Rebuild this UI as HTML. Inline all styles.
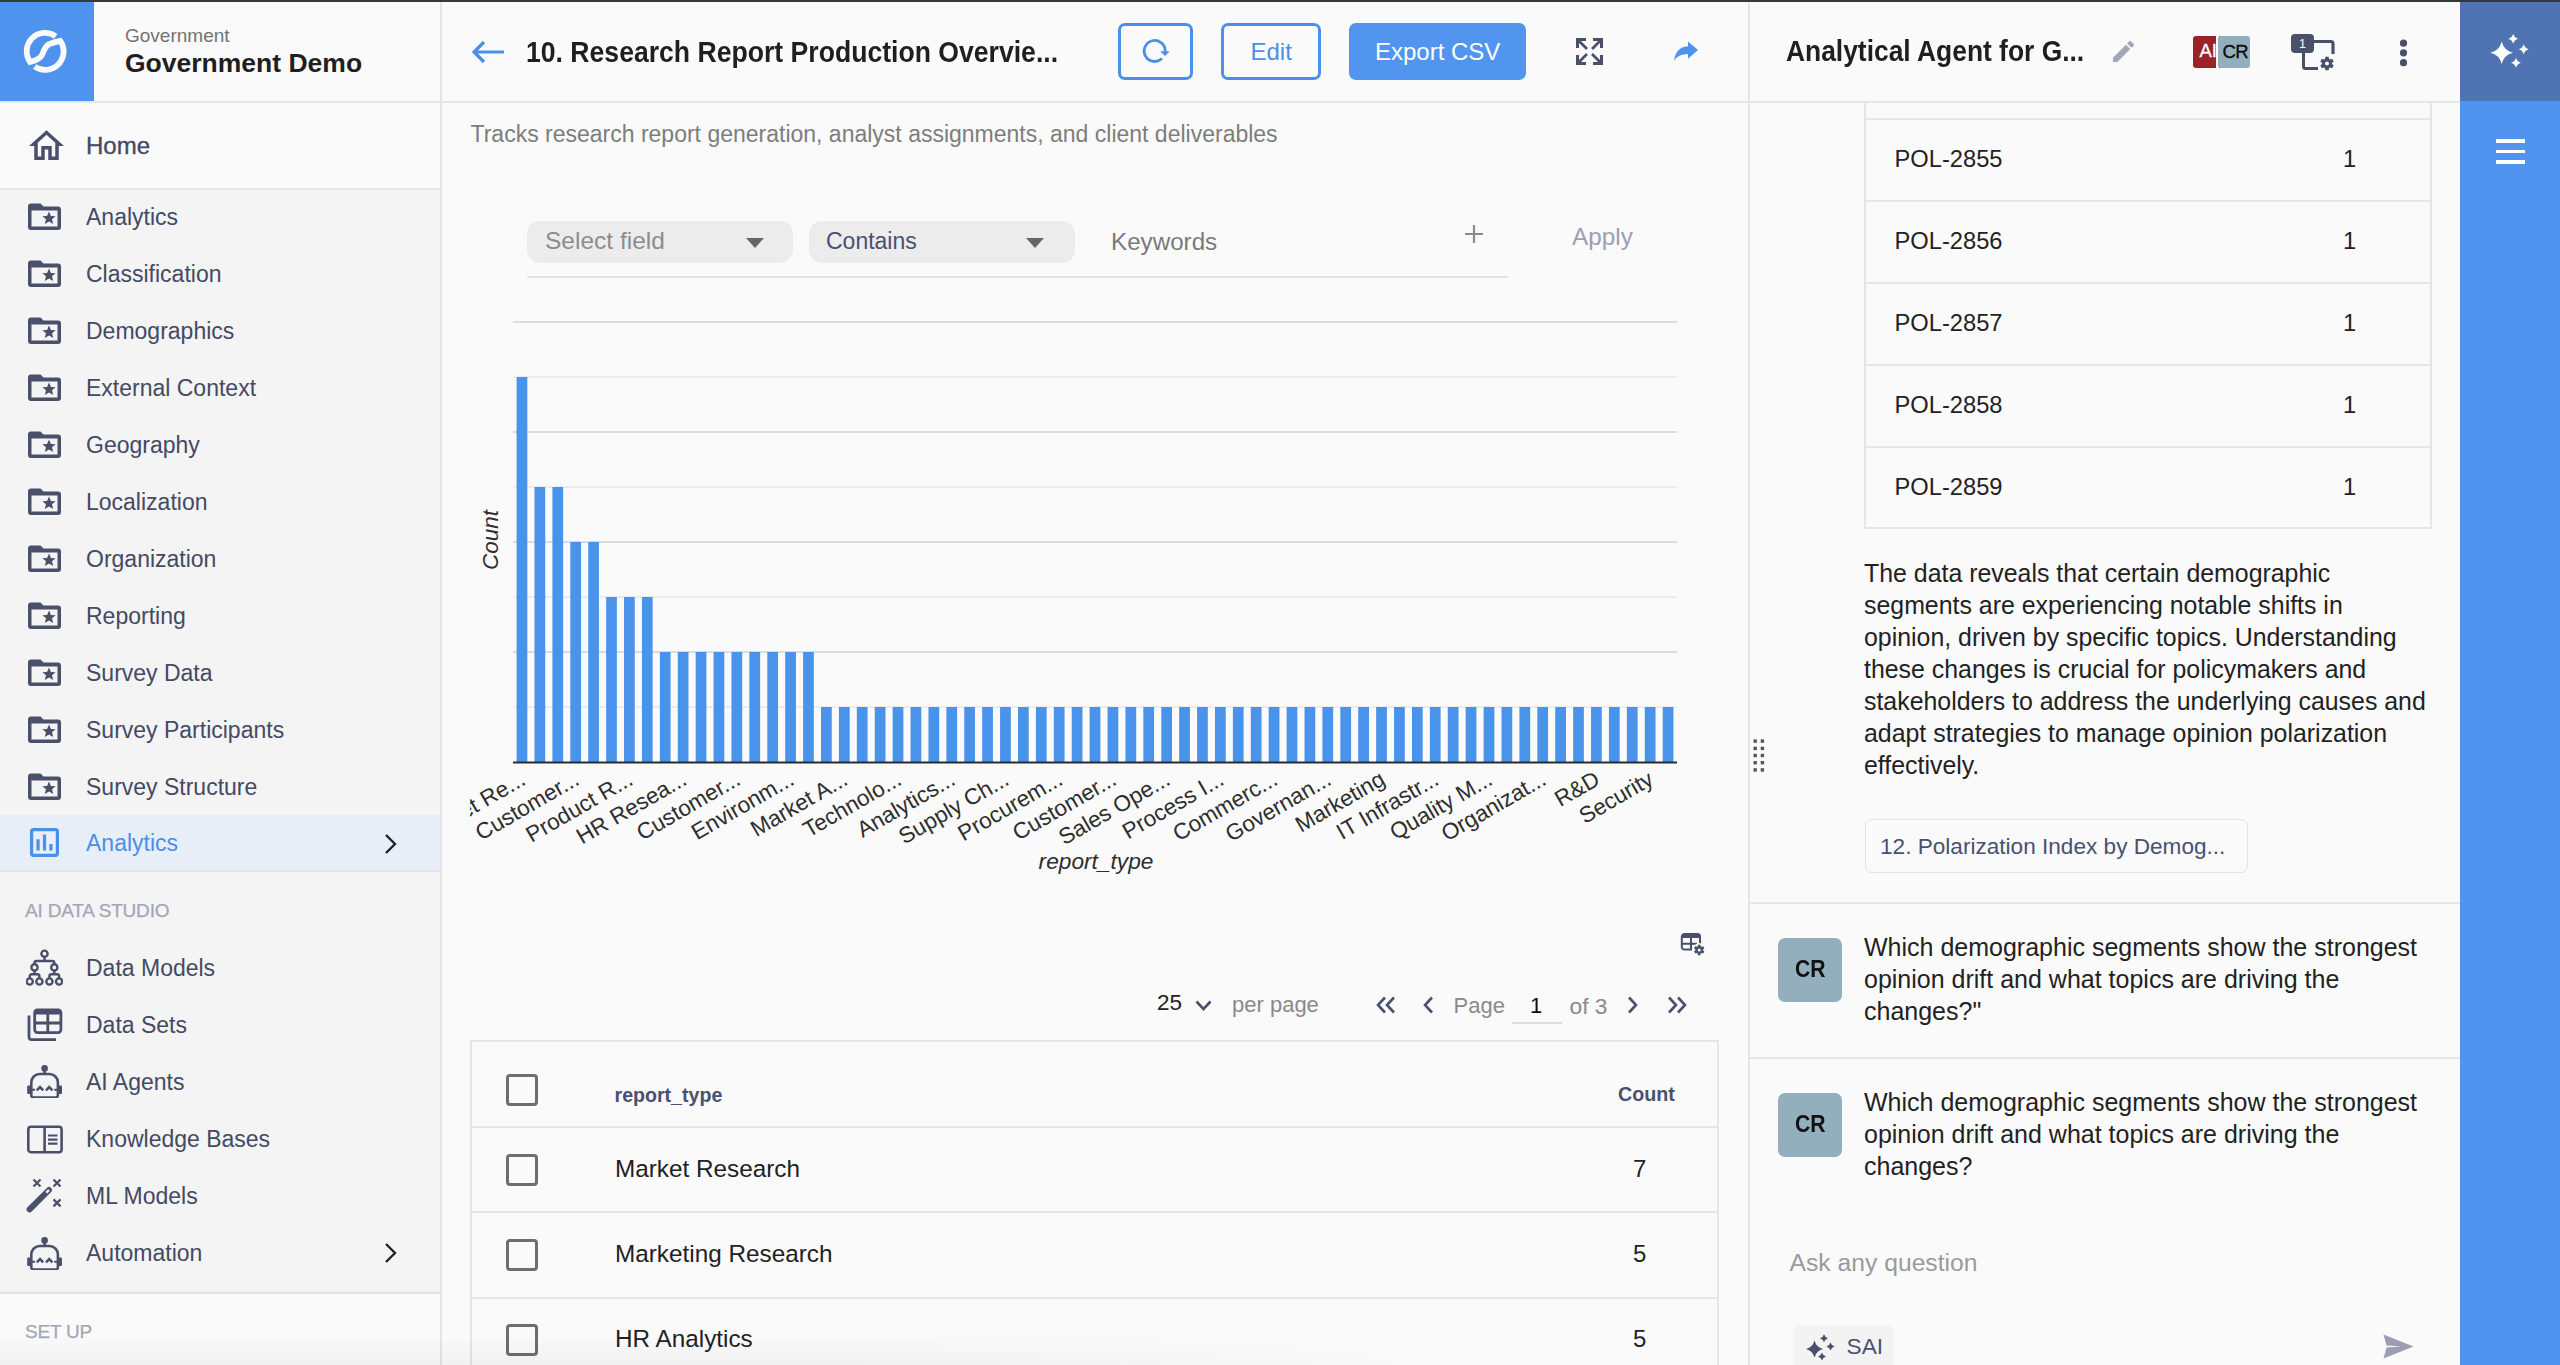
<!DOCTYPE html>
<html><head><meta charset="utf-8">
<style>
*{box-sizing:border-box;margin:0;padding:0}
html,body{width:2560px;height:1365px;overflow:hidden}
body{position:relative;background:#fafafa;font-family:"Liberation Sans",sans-serif;color:#222}
.a{position:absolute}
.t{position:absolute;white-space:nowrap;line-height:1}
.hl{position:absolute;height:2px;background:#e6e6e6}
.vl{position:absolute;width:2px;background:#e6e6e6}
/* sidebar */
#side{left:0;top:0;width:440px;height:1365px;background:#f4f4f4}
.nav{position:absolute;left:86px;font-size:23px;color:#434a63;white-space:nowrap;line-height:1}
.ico{position:absolute;left:26px}
</style></head>
<body>
<!-- top dark line -->
<div class="a" style="left:0;top:0;width:2560px;height:2px;background:#3a3836;z-index:10"></div>

<!-- SIDEBAR -->
<div class="a" id="side"></div>
<div class="a" style="left:0;top:0;width:440px;height:189px;background:#fafafa"></div>
<div class="a" style="left:0;top:2px;width:94px;height:99px;background:#4f93ef"></div>
<svg class="a" style="left:0;top:0" width="94" height="101" viewBox="0 0 94 101">
  <path d="M55.75 36.3A18.4 18.4 0 0 0 30.1 61.95C36 60.5 40 59 42 55C44 50 45.5 46 49 44.2C53 42.5 57 41.5 60.27 40.85A18.4 18.4 0 0 1 34.65 66.5" fill="none" stroke="#fafafa" stroke-width="5.8"/>
</svg>
<div class="t" style="left:125px;top:25.5px;font-size:19px;color:#727272">Government</div>
<div class="t" style="left:125px;top:50px;font-size:26.5px;font-weight:bold;color:#1f1f1f">Government Demo</div>
<div class="hl" style="left:0;top:101px;width:440px"></div>
<div class="hl" style="left:0;top:188px;width:440px"></div>
<div class="vl" style="left:440px;top:0;height:1365px"></div>


<svg width="0" height="0" style="position:absolute">
 <defs>
  <symbol id="fold" viewBox="0 0 33 27">
   <path fill-rule="evenodd" fill="#4a4f6a" d="M3 0.5H12.5L15.5 3.5H30A3 3 0 0 1 33 6.5V24A3 3 0 0 1 30 27H3A3 3 0 0 1 0 24V3.5A3 3 0 0 1 3 0.5ZM3.5 7.5V23.5H29.5V7.5Z"/>
   <path fill="#4a4f6a" d="M21 8.6L22.9 12.9L27.6 13.2L24 16.3L25.2 21L21 18.5L16.8 21L18 16.3L14.4 13.2L19.1 12.9Z"/>
  </symbol>
  <symbol id="robot" viewBox="0 0 37 33">
   <circle cx="18.6" cy="3.4" r="3.3" fill="#4a4f6a"/>
   <rect x="17.3" y="5" width="2.6" height="4" fill="#4a4f6a"/>
   <path d="M5.3 30.2V17.5A8.5 8.5 0 0 1 13.8 9H23.4A8.5 8.5 0 0 1 31.9 17.5V30.2A2.3 2.3 0 0 1 29.6 32.5H7.6A2.3 2.3 0 0 1 5.3 30.2Z" fill="none" stroke="#4a4f6a" stroke-width="2.6"/>
   <rect x="1.2" y="20.6" width="3.6" height="8.4" rx="1" fill="#4a4f6a"/>
   <rect x="32.4" y="20.6" width="3.6" height="8.4" rx="1" fill="#4a4f6a"/>
   <path d="M5 24.8H9M28.2 24.8H32" stroke="#4a4f6a" stroke-width="2"/>
   <path d="M10.8 25.4L14 22.2L17.2 25.4M20 25.4L23.2 22.2L26.4 25.4" fill="none" stroke="#4a4f6a" stroke-width="2.6"/>
  </symbol>
 </defs>
</svg>
<!-- Home -->
<svg class="a" style="left:29px;top:130px" width="35" height="30" viewBox="2 3 20 17"><path fill="#4a4f6a" d="M12 5.69l5 4.5V18h-2v-6H9v6H7v-7.81l5-4.5M12 3L2 12h3v8h6v-6h2v6h6v-8h3L12 3z"/></svg>
<div class="t" style="left:86px;top:133.5px;font-size:24px;color:#434a63;-webkit-text-stroke:0.35px #434a63">Home</div>

<!-- folder nav items -->
<svg class="a" style="left:28px;top:203px" width="33" height="27"><use href="#fold"/></svg>
<div class="nav" style="top:205.5px">Analytics</div>
<svg class="a" style="left:28px;top:260px" width="33" height="27"><use href="#fold"/></svg>
<div class="nav" style="top:262.5px">Classification</div>
<svg class="a" style="left:28px;top:317px" width="33" height="27"><use href="#fold"/></svg>
<div class="nav" style="top:319.5px">Demographics</div>
<svg class="a" style="left:28px;top:374px" width="33" height="27"><use href="#fold"/></svg>
<div class="nav" style="top:376.5px">External Context</div>
<svg class="a" style="left:28px;top:431px" width="33" height="27"><use href="#fold"/></svg>
<div class="nav" style="top:433.5px">Geography</div>
<svg class="a" style="left:28px;top:488px" width="33" height="27"><use href="#fold"/></svg>
<div class="nav" style="top:490.5px">Localization</div>
<svg class="a" style="left:28px;top:545px" width="33" height="27"><use href="#fold"/></svg>
<div class="nav" style="top:547.5px">Organization</div>
<svg class="a" style="left:28px;top:602px" width="33" height="27"><use href="#fold"/></svg>
<div class="nav" style="top:604.5px">Reporting</div>
<svg class="a" style="left:28px;top:659px" width="33" height="27"><use href="#fold"/></svg>
<div class="nav" style="top:661.5px">Survey Data</div>
<svg class="a" style="left:28px;top:716px" width="33" height="27"><use href="#fold"/></svg>
<div class="nav" style="top:718.5px">Survey Participants</div>
<svg class="a" style="left:28px;top:773px" width="33" height="27"><use href="#fold"/></svg>
<div class="nav" style="top:775.5px">Survey Structure</div>

<!-- selected analytics -->
<div class="a" style="left:0;top:815px;width:440px;height:56px;background:#e8eef8"></div>
<div class="hl" style="left:0;top:870px;width:440px;background:#e3e3e3"></div>
<svg class="a" style="left:30px;top:828px" width="29" height="29" viewBox="3 3 18 18"><path fill="#4a90e8" d="M9 17H7v-7h2v7zm4 0h-2V7h2v10zm4 0h-2v-4h2v4zm2 2H5V5h14v14zm0-16H5c-1.1 0-2 .9-2 2v14c0 1.1.9 2 2 2h14c1.1 0 2-.9 2-2V5c0-1.1-.9-2-2-2z"/></svg>
<div class="nav" style="top:832px;color:#4a90e8">Analytics</div>
<svg class="a" style="left:383px;top:833px" width="16" height="22" viewBox="0 0 16 22"><path d="M3 2L12 11L3 20" fill="none" stroke="#222" stroke-width="2.4"/></svg>

<div class="t" style="left:25px;top:901px;font-size:19px;color:#a3a6b6;letter-spacing:-0.2px;-webkit-text-stroke:0.25px #a3a6b6">AI DATA STUDIO</div>

<!-- Data models -->
<svg class="a" style="left:26px;top:949px" width="37" height="37" viewBox="0 0 37 37" fill="none" stroke="#4a4f6a" stroke-width="2.4">
 <circle cx="18.5" cy="4.7" r="3.1"/>
 <path d="M18.5 7.8V12M8.5 15.3V14A2 2 0 0 1 10.5 12H26.3A2 2 0 0 1 28.3 14V15.3"/>
 <circle cx="8.5" cy="18.4" r="3.1"/><circle cx="28.3" cy="18.4" r="3.1"/>
 <path d="M8.5 21.5V25.3M28.3 21.5V25.3M3.7 29.4V27.3A2 2 0 0 1 5.7 25.3H11.4A2 2 0 0 1 13.4 27.3V29.4M23.4 29.4V27.3A2 2 0 0 1 25.4 25.3H31.1A2 2 0 0 1 33.1 27.3V29.4"/>
 <circle cx="3.7" cy="32.5" r="3.1"/><circle cx="13.4" cy="32.5" r="3.1"/><circle cx="23.4" cy="32.5" r="3.1"/><circle cx="33.1" cy="32.5" r="3.1"/>
</svg>
<div class="nav" style="top:956.5px">Data Models</div>
<!-- Data sets -->
<svg class="a" style="left:26px;top:1008px" width="38" height="34" viewBox="0 0 38 34" fill="none" stroke="#4a4f6a" stroke-width="2.8">
 <rect x="8.7" y="1.9" width="26.2" height="22.7" rx="2.8"/>
 <rect x="8.5" y="1.5" width="26.5" height="5" fill="#4a4f6a" stroke="none" rx="1"/>
 <path d="M8.7 15H34.9M21.8 5V24.6"/>
 <path d="M3 7.5V29.2A2.4 2.4 0 0 0 5.4 31.6H30"/>
</svg>
<div class="nav" style="top:1013.5px">Data Sets</div>
<!-- AI agents -->
<svg class="a" style="left:26px;top:1065px" width="37" height="33"><use href="#robot"/></svg>
<div class="nav" style="top:1070.5px">AI Agents</div>
<!-- Knowledge -->
<svg class="a" style="left:26px;top:1125px" width="37" height="29" viewBox="0 0 37 29" fill="none" stroke="#4a4f6a" stroke-width="2.6">
 <rect x="2.3" y="1.8" width="33.3" height="25.4" rx="2.6"/>
 <path d="M18.6 1.8V27.2"/>
 <path d="M22 10.5H31.5M22 14.6H31.5M22 18.7H31.5" stroke-width="2.2"/>
</svg>
<div class="nav" style="top:1127.5px">Knowledge Bases</div>
<!-- ML models -->
<svg class="a" style="left:26px;top:1178px" width="37" height="37" viewBox="0 0 37 37">
 <path d="M3.6 31.4L23 12" stroke="#4a4f6a" stroke-width="6" stroke-linecap="round"/>
 <path d="M20.3 14.7L23 12" stroke="#f4f4f4" stroke-width="2.4"/>
 <path d="M7.5 1.5L14.5 8.5M14.5 1.5L7.5 8.5M27.5 1.5L34.5 8.5M34.5 1.5L27.5 8.5M27.5 21.4L34.5 28.4M34.5 21.4L27.5 28.4" stroke="#4a4f6a" stroke-width="2.2"/>
</svg>
<div class="nav" style="top:1184.5px">ML Models</div>
<!-- Automation -->
<svg class="a" style="left:26px;top:1237px" width="37" height="33"><use href="#robot"/></svg>
<div class="nav" style="top:1241.5px">Automation</div>
<svg class="a" style="left:383px;top:1242px" width="16" height="22" viewBox="0 0 16 22"><path d="M3 2L12 11L3 20" fill="none" stroke="#222" stroke-width="2.4"/></svg>

<div class="hl" style="left:0;top:1292px;width:440px;background:#e3e3e3"></div>
<div class="a" style="left:0;top:1294px;width:440px;height:71px;background:#fafafa"></div>
<div class="t" style="left:25px;top:1322px;font-size:19px;color:#a3a6b6;letter-spacing:-0.2px;-webkit-text-stroke:0.25px #a3a6b6">SET UP</div>

<!-- MAIN HEADER -->
<div class="hl" style="left:441px;top:101px;width:1308px"></div>
<div class="vl" style="left:1748px;top:0;height:1365px"></div>
<svg class="a" style="left:471px;top:40px" width="34" height="24" viewBox="0 0 34 24"><path d="M33 12H3M13 2L3 12L13 22" fill="none" stroke="#4a90e8" stroke-width="3.2"/></svg>
<div class="t" style="left:526px;top:37.5px;font-size:29px;font-weight:bold;color:#1f1f1f;transform:scaleX(0.917);transform-origin:0 0">10. Research Report Production Overvie...</div>

<div class="a" style="left:1118px;top:23px;width:75px;height:57px;border:3px solid #4a90e8;border-radius:7px"></div>
<svg class="a" style="left:1140px;top:36px" width="32" height="28" viewBox="0 0 32 28"><path d="M21.2 23.2A10.5 10.5 0 1 1 25.2 14.7" fill="none" stroke="#4a90e8" stroke-width="2.8" stroke-linecap="round"/><path d="M20.2 15.2H29.8L25 19.9Z" fill="#4a90e8"/></svg>
<div class="a" style="left:1221px;top:23px;width:100px;height:57px;border:3px solid #4a90e8;border-radius:7px"></div>
<div class="t" style="left:1250.5px;top:39.5px;font-size:24px;color:#4a90e8">Edit</div>
<div class="a" style="left:1349px;top:23px;width:177px;height:57px;background:#5195ee;border-radius:7px"></div>
<div class="t" style="left:1375px;top:39.5px;font-size:24px;color:#fff">Export CSV</div>
<svg class="a" style="left:1576px;top:38px" width="27" height="27" viewBox="0 0 27 27" fill="none" stroke="#4a4f6a" stroke-width="3">
 <path d="M1.5 10V1.5H10M17 1.5H25.5V10M25.5 17V25.5H17M10 25.5H1.5V17"/>
 <path d="M2.5 2.5L11 11M24.5 2.5L16 11M24.5 24.5L16 16M2.5 24.5L11 16" stroke-width="2.8"/>
</svg>
<svg class="a" style="left:1673px;top:41px" width="26" height="22" viewBox="0 0 26 22"><path fill="#4d94ef" d="M25 9L15 0.5V5.2C6 5.8 2 11.5 1 20C4 15 8 13.2 15 13V17.8Z"/></svg>

<div class="t" style="left:470.5px;top:122.5px;font-size:23px;color:#7d7d7d">Tracks research report generation, analyst assignments, and client deliverables</div>

<!-- filter -->
<div class="a" style="left:527px;top:221px;width:266px;height:42px;background:#ececec;border-radius:13px"></div>
<div class="t" style="left:545px;top:229px;font-size:24.5px;color:#8c8c8c">Select field</div>
<svg class="a" style="left:746px;top:238px" width="18" height="10"><path d="M0 0H18L9 10Z" fill="#666"/></svg>
<div class="a" style="left:809px;top:221px;width:266px;height:42px;background:#ececec;border-radius:13px"></div>
<div class="t" style="left:826px;top:230px;font-size:23px;color:#4a5070">Contains</div>
<svg class="a" style="left:1026px;top:238px" width="18" height="10"><path d="M0 0H18L9 10Z" fill="#666"/></svg>
<div class="t" style="left:1111px;top:229.5px;font-size:24.2px;color:#7a7a7a">Keywords</div>
<svg class="a" style="left:1464px;top:224px" width="20" height="20"><path d="M10 1V19M1 10H19" stroke="#8a8a8a" stroke-width="2.2"/></svg>
<div class="t" style="left:1572px;top:224.5px;font-size:24.3px;color:#9c9fb2">Apply</div>
<div class="hl" style="left:527px;top:276px;width:981px;background:#e3e3e3"></div>

<svg class="a" style="left:470px;top:290px" width="1278" height="610" viewBox="470 290 1278 610">
<rect x="513" y="321.25" width="1164" height="1.5" fill="#d2d2d2"/>
<rect x="513" y="376.25" width="1164" height="1.5" fill="#e8e8e8"/>
<rect x="513" y="431.25" width="1164" height="1.5" fill="#d2d2d2"/>
<rect x="513" y="486.25" width="1164" height="1.5" fill="#e8e8e8"/>
<rect x="513" y="541.25" width="1164" height="1.5" fill="#d2d2d2"/>
<rect x="513" y="596.25" width="1164" height="1.5" fill="#e8e8e8"/>
<rect x="513" y="651.25" width="1164" height="1.5" fill="#d2d2d2"/>
<rect x="513" y="706.25" width="1164" height="1.5" fill="#e8e8e8"/>
<rect x="516.58" y="377" width="10.74" height="385" fill="#4a93ea"/>
<rect x="534.49" y="487" width="10.74" height="275" fill="#4a93ea"/>
<rect x="552.40" y="487" width="10.74" height="275" fill="#4a93ea"/>
<rect x="570.30" y="542" width="10.74" height="220" fill="#4a93ea"/>
<rect x="588.21" y="542" width="10.74" height="220" fill="#4a93ea"/>
<rect x="606.12" y="597" width="10.74" height="165" fill="#4a93ea"/>
<rect x="624.03" y="597" width="10.74" height="165" fill="#4a93ea"/>
<rect x="641.94" y="597" width="10.74" height="165" fill="#4a93ea"/>
<rect x="659.84" y="652" width="10.74" height="110" fill="#4a93ea"/>
<rect x="677.75" y="652" width="10.74" height="110" fill="#4a93ea"/>
<rect x="695.66" y="652" width="10.74" height="110" fill="#4a93ea"/>
<rect x="713.57" y="652" width="10.74" height="110" fill="#4a93ea"/>
<rect x="731.47" y="652" width="10.74" height="110" fill="#4a93ea"/>
<rect x="749.38" y="652" width="10.74" height="110" fill="#4a93ea"/>
<rect x="767.29" y="652" width="10.74" height="110" fill="#4a93ea"/>
<rect x="785.20" y="652" width="10.74" height="110" fill="#4a93ea"/>
<rect x="803.10" y="652" width="10.74" height="110" fill="#4a93ea"/>
<rect x="821.01" y="707" width="10.74" height="55" fill="#4a93ea"/>
<rect x="838.92" y="707" width="10.74" height="55" fill="#4a93ea"/>
<rect x="856.83" y="707" width="10.74" height="55" fill="#4a93ea"/>
<rect x="874.74" y="707" width="10.74" height="55" fill="#4a93ea"/>
<rect x="892.64" y="707" width="10.74" height="55" fill="#4a93ea"/>
<rect x="910.55" y="707" width="10.74" height="55" fill="#4a93ea"/>
<rect x="928.46" y="707" width="10.74" height="55" fill="#4a93ea"/>
<rect x="946.37" y="707" width="10.74" height="55" fill="#4a93ea"/>
<rect x="964.27" y="707" width="10.74" height="55" fill="#4a93ea"/>
<rect x="982.18" y="707" width="10.74" height="55" fill="#4a93ea"/>
<rect x="1000.09" y="707" width="10.74" height="55" fill="#4a93ea"/>
<rect x="1018.00" y="707" width="10.74" height="55" fill="#4a93ea"/>
<rect x="1035.90" y="707" width="10.74" height="55" fill="#4a93ea"/>
<rect x="1053.81" y="707" width="10.74" height="55" fill="#4a93ea"/>
<rect x="1071.72" y="707" width="10.74" height="55" fill="#4a93ea"/>
<rect x="1089.63" y="707" width="10.74" height="55" fill="#4a93ea"/>
<rect x="1107.54" y="707" width="10.74" height="55" fill="#4a93ea"/>
<rect x="1125.44" y="707" width="10.74" height="55" fill="#4a93ea"/>
<rect x="1143.35" y="707" width="10.74" height="55" fill="#4a93ea"/>
<rect x="1161.26" y="707" width="10.74" height="55" fill="#4a93ea"/>
<rect x="1179.17" y="707" width="10.74" height="55" fill="#4a93ea"/>
<rect x="1197.07" y="707" width="10.74" height="55" fill="#4a93ea"/>
<rect x="1214.98" y="707" width="10.74" height="55" fill="#4a93ea"/>
<rect x="1232.89" y="707" width="10.74" height="55" fill="#4a93ea"/>
<rect x="1250.80" y="707" width="10.74" height="55" fill="#4a93ea"/>
<rect x="1268.70" y="707" width="10.74" height="55" fill="#4a93ea"/>
<rect x="1286.61" y="707" width="10.74" height="55" fill="#4a93ea"/>
<rect x="1304.52" y="707" width="10.74" height="55" fill="#4a93ea"/>
<rect x="1322.43" y="707" width="10.74" height="55" fill="#4a93ea"/>
<rect x="1340.34" y="707" width="10.74" height="55" fill="#4a93ea"/>
<rect x="1358.24" y="707" width="10.74" height="55" fill="#4a93ea"/>
<rect x="1376.15" y="707" width="10.74" height="55" fill="#4a93ea"/>
<rect x="1394.06" y="707" width="10.74" height="55" fill="#4a93ea"/>
<rect x="1411.97" y="707" width="10.74" height="55" fill="#4a93ea"/>
<rect x="1429.87" y="707" width="10.74" height="55" fill="#4a93ea"/>
<rect x="1447.78" y="707" width="10.74" height="55" fill="#4a93ea"/>
<rect x="1465.69" y="707" width="10.74" height="55" fill="#4a93ea"/>
<rect x="1483.60" y="707" width="10.74" height="55" fill="#4a93ea"/>
<rect x="1501.50" y="707" width="10.74" height="55" fill="#4a93ea"/>
<rect x="1519.41" y="707" width="10.74" height="55" fill="#4a93ea"/>
<rect x="1537.32" y="707" width="10.74" height="55" fill="#4a93ea"/>
<rect x="1555.23" y="707" width="10.74" height="55" fill="#4a93ea"/>
<rect x="1573.14" y="707" width="10.74" height="55" fill="#4a93ea"/>
<rect x="1591.04" y="707" width="10.74" height="55" fill="#4a93ea"/>
<rect x="1608.95" y="707" width="10.74" height="55" fill="#4a93ea"/>
<rect x="1626.86" y="707" width="10.74" height="55" fill="#4a93ea"/>
<rect x="1644.77" y="707" width="10.74" height="55" fill="#4a93ea"/>
<rect x="1662.67" y="707" width="10.74" height="55" fill="#4a93ea"/>
<rect x="513" y="761.5" width="1164" height="2" fill="#2c2c2c"/>
<g font-family="Liberation Sans" font-size="22.5" fill="#2e2e2e">
<text x="527.0" y="783.5" text-anchor="end" transform="rotate(-30 527.0 783.5)">Market Re...</text>
<text x="580.7" y="783.5" text-anchor="end" transform="rotate(-30 580.7 783.5)">Customer...</text>
<text x="634.4" y="783.5" text-anchor="end" transform="rotate(-30 634.4 783.5)">Product R...</text>
<text x="688.1" y="783.5" text-anchor="end" transform="rotate(-30 688.1 783.5)">HR Resea...</text>
<text x="741.8" y="783.5" text-anchor="end" transform="rotate(-30 741.8 783.5)">Customer...</text>
<text x="795.6" y="783.5" text-anchor="end" transform="rotate(-30 795.6 783.5)">Environm...</text>
<text x="849.3" y="783.5" text-anchor="end" transform="rotate(-30 849.3 783.5)">Market A...</text>
<text x="903.0" y="783.5" text-anchor="end" transform="rotate(-30 903.0 783.5)">Technolo...</text>
<text x="956.7" y="783.5" text-anchor="end" transform="rotate(-30 956.7 783.5)">Analytics...</text>
<text x="1010.5" y="783.5" text-anchor="end" transform="rotate(-30 1010.5 783.5)">Supply Ch...</text>
<text x="1064.2" y="783.5" text-anchor="end" transform="rotate(-30 1064.2 783.5)">Procurem...</text>
<text x="1117.9" y="783.5" text-anchor="end" transform="rotate(-30 1117.9 783.5)">Customer...</text>
<text x="1171.6" y="783.5" text-anchor="end" transform="rotate(-30 1171.6 783.5)">Sales Ope...</text>
<text x="1225.4" y="783.5" text-anchor="end" transform="rotate(-30 1225.4 783.5)">Process I...</text>
<text x="1279.1" y="783.5" text-anchor="end" transform="rotate(-30 1279.1 783.5)">Commerc...</text>
<text x="1332.8" y="783.5" text-anchor="end" transform="rotate(-30 1332.8 783.5)">Governan...</text>
<text x="1386.5" y="783.5" text-anchor="end" transform="rotate(-30 1386.5 783.5)">Marketing</text>
<text x="1440.2" y="783.5" text-anchor="end" transform="rotate(-30 1440.2 783.5)">IT Infrastr...</text>
<text x="1494.0" y="783.5" text-anchor="end" transform="rotate(-30 1494.0 783.5)">Quality M...</text>
<text x="1547.7" y="783.5" text-anchor="end" transform="rotate(-30 1547.7 783.5)">Organizat...</text>
<text x="1601.4" y="783.5" text-anchor="end" transform="rotate(-30 1601.4 783.5)">R&amp;D</text>
<text x="1655.1" y="783.5" text-anchor="end" transform="rotate(-30 1655.1 783.5)">Security</text>
</g>
<text x="498" y="540" font-family="Liberation Sans" font-size="22.5" font-style="italic" fill="#2e2e2e" text-anchor="middle" transform="rotate(-90 498 540)">Count</text>
<text x="1096" y="869" font-family="Liberation Sans" font-size="22.7" font-style="italic" fill="#2e2e2e" text-anchor="middle">report_type</text>
</svg>
<!-- table settings icon -->
<svg class="a" style="left:1680px;top:932px" width="28" height="28" viewBox="0 0 28 28">
 <path d="M12 17.6H4.3A2.5 2.5 0 0 1 1.8 15.1V4.6A2.5 2.5 0 0 1 4.3 2.1H17.5A2.5 2.5 0 0 1 20 4.6V11.5" fill="none" stroke="#4a4f6a" stroke-width="2"/>
 <rect x="2" y="2.5" width="17.6" height="3.5" fill="#4a4f6a"/>
 <path d="M1.8 11.7H17M11 5V17" fill="none" stroke="#4a4f6a" stroke-width="2"/>
 <circle cx="19.2" cy="17.9" r="6.6" fill="#fafafa"/>
 <path fill-rule="evenodd" fill="#4a4f6a" d="M20.75 21.37L20.46 23.15L17.94 23.15L17.65 21.37L16.97 20.97L15.28 21.62L14.02 19.43L15.42 18.30L15.42 17.50L14.02 16.37L15.28 14.18L16.97 14.83L17.65 14.43L17.94 12.65L20.46 12.65L20.75 14.43L21.43 14.83L23.12 14.18L24.38 16.37L22.98 17.50L22.98 18.30L24.38 19.43L23.12 21.62L21.43 20.97ZM20.70 17.90A1.5 1.5 0 1 0 17.70 17.90A1.5 1.5 0 1 0 20.70 17.90Z"/>
</svg>

<!-- pagination -->
<div class="t" style="left:1157px;top:992px;font-size:22.5px;color:#222">25</div>
<svg class="a" style="left:1195px;top:1000px" width="17" height="12"><path d="M1.5 1.5L8.5 9L15.5 1.5" fill="none" stroke="#4a5070" stroke-width="2.6"/></svg>
<div class="t" style="left:1232px;top:993.5px;font-size:22px;color:#8a8a8a">per page</div>
<svg class="a" style="left:1375px;top:996px" width="21" height="18" viewBox="0 0 21 18"><path d="M10 1.5L3 9L10 16.5M19 1.5L12 9L19 16.5" fill="none" stroke="#4a5070" stroke-width="2.6"/></svg>
<svg class="a" style="left:1421px;top:996px" width="13" height="18" viewBox="0 0 13 18"><path d="M11 1.5L4 9L11 16.5" fill="none" stroke="#4a5070" stroke-width="2.6"/></svg>
<div class="t" style="left:1453.5px;top:994.5px;font-size:22px;color:#8a8a8a">Page</div>
<div class="t" style="left:1530px;top:994.5px;font-size:22px;color:#111">1</div>
<div class="hl" style="left:1512px;top:1022px;width:50px;height:1.5px;background:#dcdcdc"></div>
<div class="t" style="left:1569.5px;top:994.5px;font-size:22.8px;color:#8a8a8a">of 3</div>
<svg class="a" style="left:1627px;top:996px" width="13" height="18" viewBox="0 0 13 18"><path d="M2 1.5L9 9L2 16.5" fill="none" stroke="#4a5070" stroke-width="2.6"/></svg>
<svg class="a" style="left:1667px;top:996px" width="21" height="18" viewBox="0 0 21 18"><path d="M2 1.5L9 9L2 16.5M11 1.5L18 9L11 16.5" fill="none" stroke="#4a5070" stroke-width="2.6"/></svg>

<!-- table -->
<div class="a" style="left:470px;top:1040px;width:1249px;height:340px;border:2px solid #e6e6e6;border-bottom:none"></div>
<div class="hl" style="left:470px;top:1126px;width:1249px"></div>
<div class="hl" style="left:470px;top:1211px;width:1249px"></div>
<div class="hl" style="left:470px;top:1297px;width:1249px"></div>
<div class="a" style="left:506px;top:1074px;width:32px;height:32px;border:3.2px solid #6e6e6e;border-radius:4px"></div>
<div class="t" style="left:614.5px;top:1085.5px;font-size:19.6px;font-weight:bold;color:#4a5070">report_type</div>
<div class="t" style="left:1618px;top:1084.5px;font-size:19.7px;font-weight:bold;color:#4a5070">Count</div>
<div class="a" style="left:506px;top:1154px;width:32px;height:32px;border:3.2px solid #6e6e6e;border-radius:4px"></div>
<div class="t" style="left:615px;top:1156.5px;font-size:24.3px;color:#222">Market Research</div>
<div class="t" style="left:1633px;top:1156.5px;font-size:24px;color:#222">7</div>
<div class="a" style="left:506px;top:1239px;width:32px;height:32px;border:3.2px solid #6e6e6e;border-radius:4px"></div>
<div class="t" style="left:615px;top:1241.5px;font-size:24.3px;color:#222">Marketing Research</div>
<div class="t" style="left:1633px;top:1241.5px;font-size:24px;color:#222">5</div>
<div class="a" style="left:506px;top:1324px;width:32px;height:32px;border:3.2px solid #6e6e6e;border-radius:4px"></div>
<div class="t" style="left:615px;top:1326.5px;font-size:24.3px;color:#222">HR Analytics</div>
<div class="t" style="left:1633px;top:1326.5px;font-size:24px;color:#222">5</div>

<!-- RIGHT PANEL HEADER -->
<div class="t" style="left:1786px;top:36.9px;font-size:29px;font-weight:bold;color:#1f1f1f;transform:scaleX(0.91);transform-origin:0 0">Analytical Agent for G...</div>
<svg class="a" style="left:2113px;top:41px" width="21" height="21" viewBox="3 3 18 18"><path fill="#a3a6b8" d="M3 17.25V21h3.75L17.81 9.94l-3.75-3.75L3 17.25zM20.71 7.04c.39-.39.39-1.02 0-1.41l-2.34-2.34c-.39-.39-1.02-.39-1.41 0l-1.83 1.83 3.75 3.75 1.83-1.83z"/></svg>
<div class="a" style="left:2193px;top:35.5px;width:32px;height:32px;background:#9b2226;border-radius:3px;overflow:hidden"><div class="t" style="left:6.5px;top:6.5px;font-size:18.5px;color:#fff;-webkit-text-stroke:0.3px #fff">AI</div></div>
<div class="a" style="left:2215.5px;top:35.5px;width:3px;height:32px;background:#fafafa"></div>
<div class="a" style="left:2218px;top:35.5px;width:32px;height:32px;background:#93afbe;border-radius:3px"></div>
<div class="t" style="left:2222.5px;top:42.5px;font-size:18.5px;color:#0b0b0b;letter-spacing:-0.6px;-webkit-text-stroke:0.3px #0b0b0b">CR</div>
<svg class="a" style="left:2290px;top:33px" width="46" height="40" viewBox="0 0 46 40">
 <path d="M24 8.5H41A2 2 0 0 1 43 10.5V21" fill="none" stroke="#4a4f6a" stroke-width="3.2"/>
 <path d="M13.5 20V33.5A2 2 0 0 0 15.5 35.5H28" fill="none" stroke="#4a4f6a" stroke-width="3"/>
 <rect x="1" y="1" width="23" height="19" rx="4" fill="#4a4f6a"/>
 <text x="12.6" y="14.6" font-family="Liberation Sans" font-size="12.5" fill="#fff" text-anchor="middle">1</text>
 <path fill-rule="evenodd" fill="#4a4f6a" d="M39.03 35.07L38.63 37.31L35.37 37.31L34.97 35.07L34.06 34.55L31.92 35.32L30.29 32.49L32.03 31.02L32.03 29.98L30.29 28.51L31.92 25.68L34.06 26.45L34.97 25.93L35.37 23.69L38.63 23.69L39.03 25.93L39.94 26.45L42.08 25.68L43.71 28.51L41.97 29.98L41.97 31.02L43.71 32.49L42.08 35.32L39.94 34.55ZM39.00 30.50A2.0 2.0 0 1 0 35.00 30.50A2.0 2.0 0 1 0 39.00 30.50Z"/>
 
</svg>
<svg class="a" style="left:2396px;top:36px" width="15" height="34"><circle cx="7.5" cy="7.2" r="3.6" fill="#4a4f6a"/><circle cx="7.5" cy="16.8" r="3.6" fill="#4a4f6a"/><circle cx="7.5" cy="26.7" r="3.6" fill="#4a4f6a"/></svg>
<div class="hl" style="left:1749px;top:101px;width:711px"></div>

<!-- inner table card -->
<div class="a" style="left:1864px;top:101px;width:568px;height:428px;border:2px solid #e6e6e6;border-top:none"></div>
<div class="hl" style="left:1864px;top:118px;width:568px"></div>
<div class="hl" style="left:1864px;top:200px;width:568px"></div>
<div class="hl" style="left:1864px;top:282px;width:568px"></div>
<div class="hl" style="left:1864px;top:364px;width:568px"></div>
<div class="hl" style="left:1864px;top:446px;width:568px"></div>
<div class="t" style="left:1894.5px;top:147.6px;font-size:23.7px;color:#222">POL-2855</div>
<div class="t" style="left:2343px;top:147.6px;font-size:23.7px;color:#222">1</div>
<div class="t" style="left:1894.5px;top:229.6px;font-size:23.7px;color:#222">POL-2856</div>
<div class="t" style="left:2343px;top:229.6px;font-size:23.7px;color:#222">1</div>
<div class="t" style="left:1894.5px;top:311.6px;font-size:23.7px;color:#222">POL-2857</div>
<div class="t" style="left:2343px;top:311.6px;font-size:23.7px;color:#222">1</div>
<div class="t" style="left:1894.5px;top:393.6px;font-size:23.7px;color:#222">POL-2858</div>
<div class="t" style="left:2343px;top:393.6px;font-size:23.7px;color:#222">1</div>
<div class="t" style="left:1894.5px;top:475.6px;font-size:23.7px;color:#222">POL-2859</div>
<div class="t" style="left:2343px;top:475.6px;font-size:23.7px;color:#222">1</div>

<!-- paragraph -->
<div class="a" style="left:1864px;top:557.4px;font-size:24.9px;line-height:32px;color:#222;white-space:nowrap">
The data reveals that certain demographic<br>segments are experiencing notable shifts in<br>opinion, driven by specific topics. Understanding<br>these changes is crucial for policymakers and<br>stakeholders to address the underlying causes and<br>adapt strategies to manage opinion polarization<br>effectively.
</div>
<div class="a" style="left:1865px;top:819px;width:383px;height:54px;border:1.5px solid #e2e2e2;border-radius:7px"></div>
<div class="t" style="left:1880px;top:835.5px;font-size:22.6px;color:#4a5070">12. Polarization Index by Demog...</div>

<!-- drag handle -->
<svg class="a" style="left:1753px;top:739px" width="12" height="33">
 <g fill="#555"><rect x="0.5" y="0.4" width="3.4" height="3.4"/><rect x="7.7" y="0.4" width="3.4" height="3.4"/>
 <rect x="0.5" y="7.7" width="3.4" height="3.4"/><rect x="7.7" y="7.7" width="3.4" height="3.4"/>
 <rect x="0.5" y="14.8" width="3.4" height="3.4"/><rect x="7.7" y="14.8" width="3.4" height="3.4"/>
 <rect x="0.5" y="22" width="3.4" height="3.4"/><rect x="7.7" y="22" width="3.4" height="3.4"/>
 <rect x="0.5" y="29.2" width="3.4" height="3.4"/><rect x="7.7" y="29.2" width="3.4" height="3.4"/></g>
</svg>

<div class="hl" style="left:1749px;top:902px;width:711px"></div>
<div class="a" style="left:1778px;top:938px;width:64px;height:64px;background:#93afbe;border-radius:7px"></div>
<div class="t" style="left:1794.5px;top:958px;font-size:23px;font-weight:bold;color:#111;transform:scaleX(0.92);transform-origin:0 0">CR</div>
<div class="a" style="left:1864px;top:931.4px;font-size:25px;line-height:32px;color:#222;white-space:nowrap">Which demographic segments show the strongest<br>opinion drift and what topics are driving the<br>changes?"</div>
<div class="hl" style="left:1749px;top:1057px;width:711px"></div>
<div class="a" style="left:1778px;top:1093px;width:64px;height:64px;background:#93afbe;border-radius:7px"></div>
<div class="t" style="left:1794.5px;top:1113px;font-size:23px;font-weight:bold;color:#111;transform:scaleX(0.92);transform-origin:0 0">CR</div>
<div class="a" style="left:1864px;top:1086.4px;font-size:25px;line-height:32px;color:#222;white-space:nowrap">Which demographic segments show the strongest<br>opinion drift and what topics are driving the<br>changes?</div>

<div class="t" style="left:1789.5px;top:1251px;font-size:24.7px;color:#9a9a9a">Ask any question</div>
<div class="a" style="left:1793px;top:1325px;width:101px;height:50px;background:#f3f3f3;border-radius:8px"></div>
<svg class="a" style="left:1805px;top:1333px" width="30" height="28" viewBox="0 0 30 28">
 <path fill="#4a4f6a" d="M9.5 7.5Q11.3 14.2 18.0 16Q11.3 17.8 9.5 24.5Q7.7 17.8 1.0 16Q7.7 14.2 9.5 7.5Z"/>
 <path fill="#4a4f6a" d="M19 1.2999999999999998Q19.9 4.3999999999999995 23 5.3Q19.9 6.2 19 9.3Q18.1 6.2 15 5.3Q18.1 4.3999999999999995 19 1.2999999999999998Z"/>
 <path fill="#4a4f6a" d="M25.5 9.5Q26.4 12.6 29.5 13.5Q26.4 14.4 25.5 17.5Q24.6 14.4 21.5 13.5Q24.6 12.6 25.5 9.5Z"/>
 <path fill="#4a4f6a" d="M17 19.5Q17.9 22.6 21 23.5Q17.9 24.4 17 27.5Q16.1 24.4 13 23.5Q16.1 22.6 17 19.5Z"/>
</svg>
<div class="t" style="left:1846.5px;top:1335.3px;font-size:22.7px;color:#4a5070">SAI</div>
<svg class="a" style="left:2383px;top:1334px" width="31" height="25" viewBox="0 0 31 25"><path fill="#9c9fb2" d="M0.5 0.5L30.5 12.5L0.5 24.5L3.5 13.5L18 12.5L3.5 11.5Z"/></svg>

<!-- RIGHT STRIP -->
<div class="a" style="left:2460px;top:0;width:100px;height:1365px;background:#5094ef"></div>
<div class="a" style="left:2460px;top:0;width:100px;height:101px;background:#4f73b3"></div>
<svg class="a" style="left:2488px;top:32px" width="42" height="40" viewBox="0 0 42 40">
 <path fill="#fff" d="M13.7 9.600000000000001Q15.899999999999999 18.6 24.9 20.8Q15.899999999999999 23.0 13.7 32.0Q11.5 23.0 2.5 20.8Q11.5 18.6 13.7 9.600000000000001Z"/>
 <path fill="#fff" d="M25.2 1.7999999999999998Q26.3 5.699999999999999 30.2 6.8Q26.3 7.9 25.2 11.8Q24.099999999999998 7.9 20.2 6.8Q24.099999999999998 5.699999999999999 25.2 1.7999999999999998Z"/>
 <path fill="#fff" d="M35.7 12.3Q36.800000000000004 16.2 40.7 17.3Q36.800000000000004 18.400000000000002 35.7 22.3Q34.6 18.400000000000002 30.700000000000003 17.3Q34.6 16.2 35.7 12.3Z"/>
 <path fill="#fff" d="M28 25.8Q29.1 29.7 33 30.8Q29.1 31.900000000000002 28 35.8Q26.9 31.900000000000002 23 30.8Q26.9 29.7 28 25.8Z"/>
</svg>
<div class="a" style="left:2496px;top:139px;width:29px;height:3.6px;background:#fff"></div>
<div class="a" style="left:2496px;top:149.6px;width:29px;height:3.6px;background:#fff"></div>
<div class="a" style="left:2496px;top:160.2px;width:29px;height:3.6px;background:#fff"></div>

<div class="a" style="left:0;top:1336px;width:1500px;height:29px;background:linear-gradient(rgba(0,0,0,0),rgba(0,0,0,0.04));-webkit-mask-image:linear-gradient(90deg,#000 55%,transparent)"></div>
</body></html>
